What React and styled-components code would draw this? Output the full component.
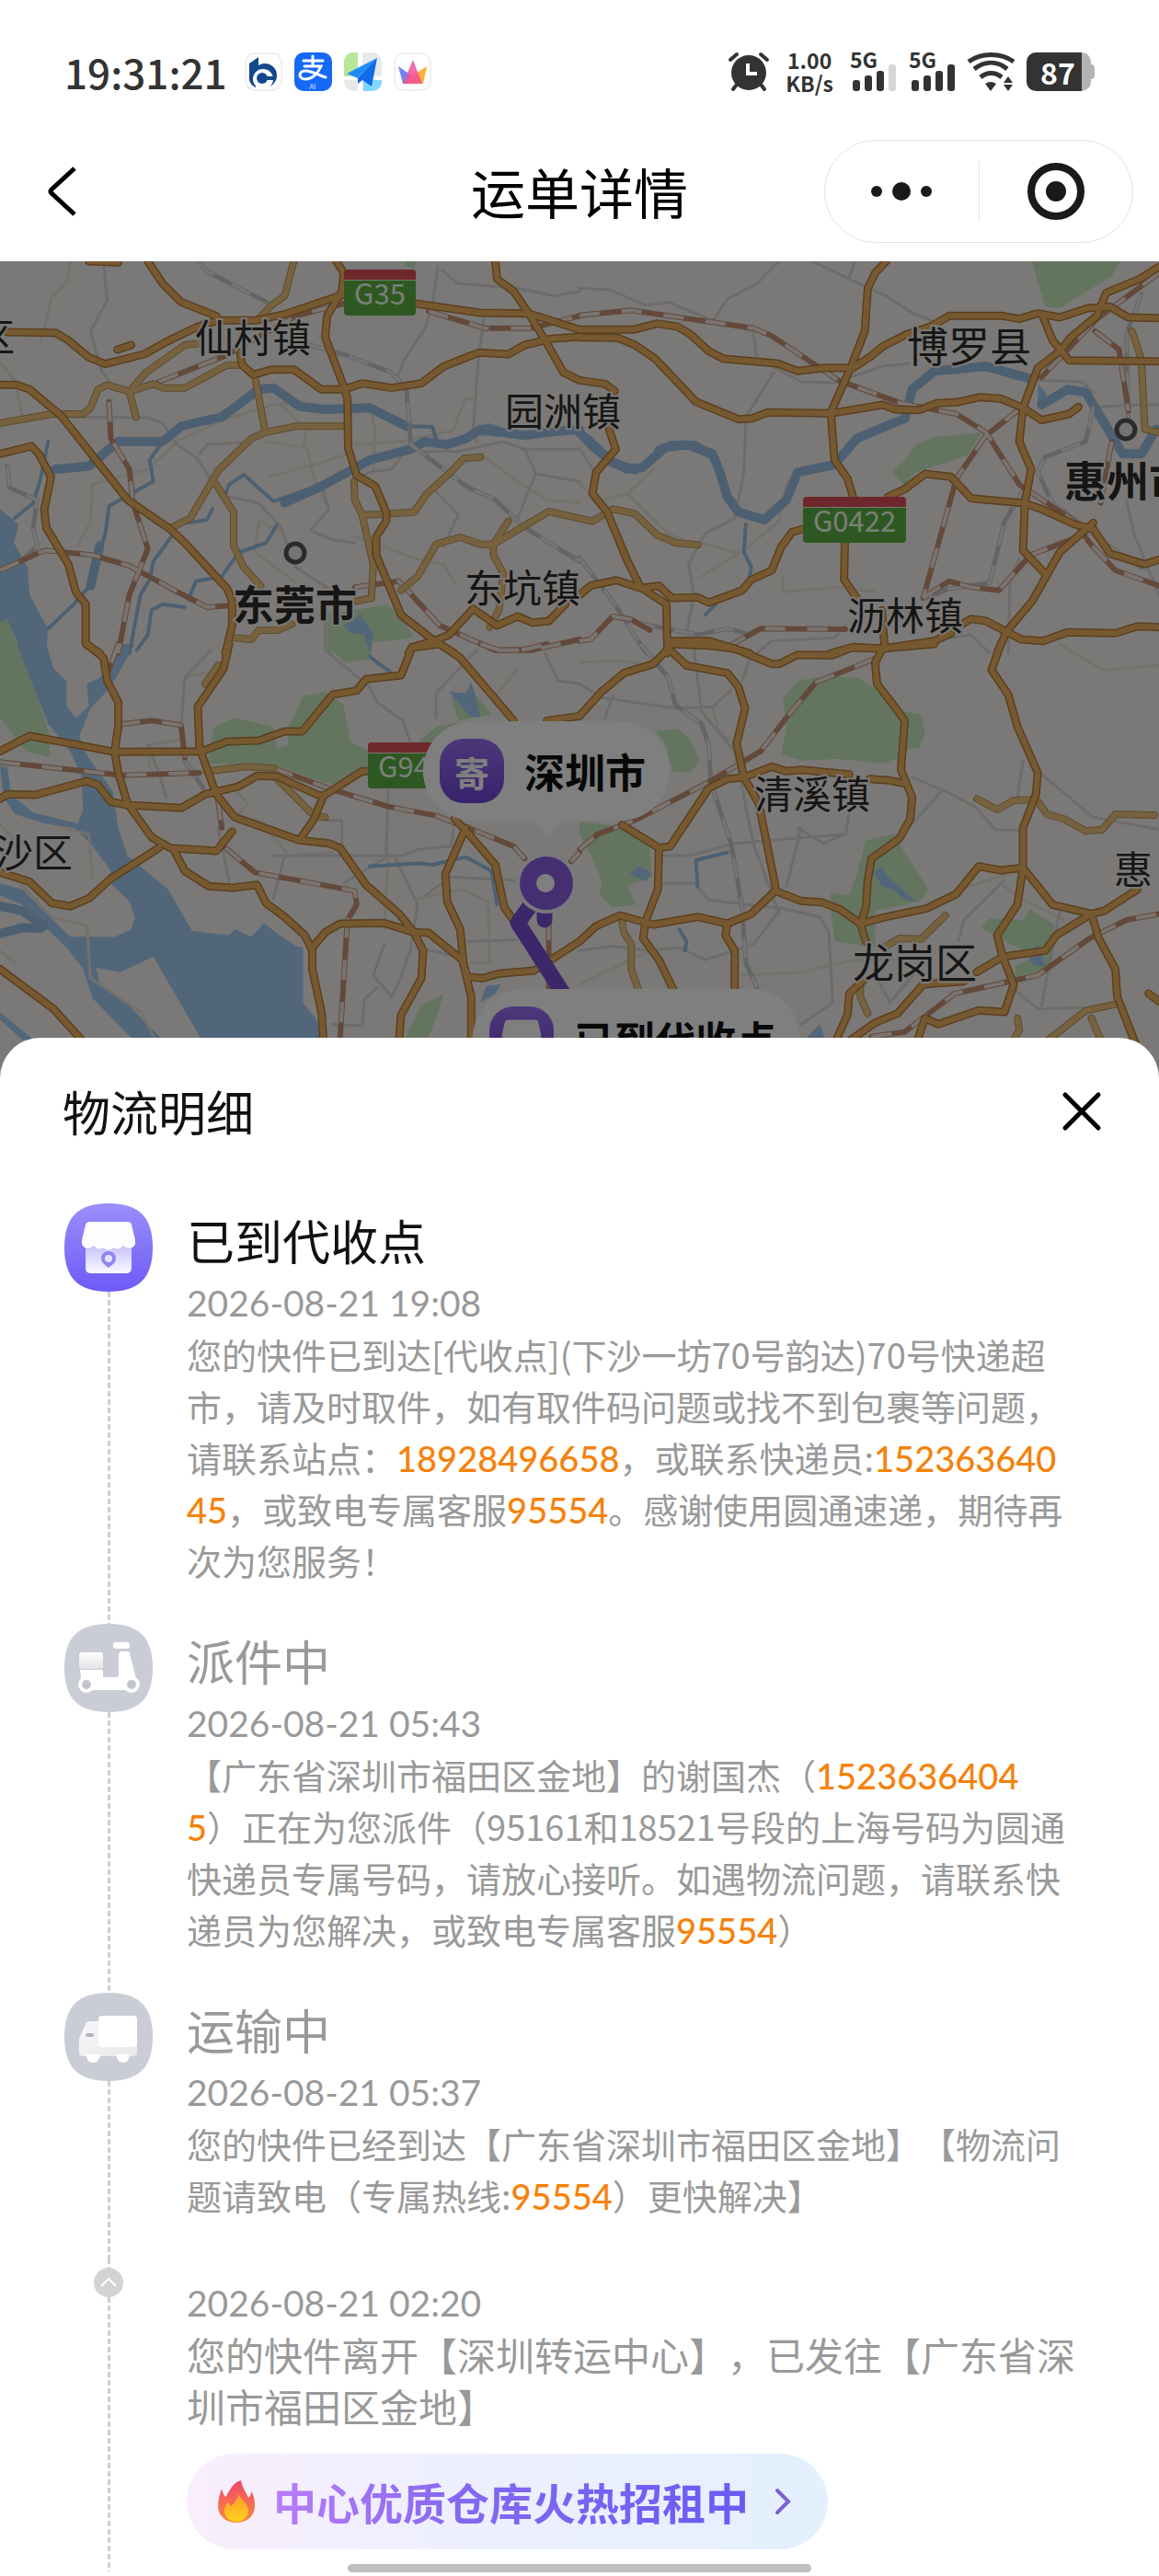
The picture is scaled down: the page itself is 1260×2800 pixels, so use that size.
import React, { useState } from "react";
import styled, { createGlobalStyle } from "styled-components";

const GlobalStyle = createGlobalStyle`
  * {
    box-sizing: border-box;
  }
  body {
    margin: 0;
    background: #ffffff;
    font-family: "Noto Sans CJK SC", sans-serif;
    text-spacing-trim: space-all;
  }
  button {
    padding: 0;
    border: none;
    background: none;
    font-family: inherit;
    cursor: pointer;
  }
  svg {
    display: block;
    flex: none;
    overflow: visible;
  }
`;

const Page = styled.div`
  position: relative;
  min-height: 100vh;
  overflow: hidden;
`;

/* status bar */
const StatusBar = styled.header`
  display: flex;
  align-items: center;
  justify-content: space-between;
  height: 132px;
  padding: 24px 70px 0;
  color: #333333;
  font-weight: 700;
`;
const StatusGroup = styled.div`
  display: flex;
  align-items: center;
  gap: 13px;
`;
const Clock = styled.time`
  margin-right: 6px;
  font-size: 44px;
  line-height: 56px;
  font-weight: 500;
`;
const NetSpeed = styled.div`
  margin: 0 5px;
  font-size: 23px;
  line-height: 25px;
  text-align: center;
`;
const Battery = styled.div`
  display: flex;
  align-items: center;
  &::after {
    content: "";
    width: 4px;
    height: 16px;
    border-radius: 0 4px 4px 0;
    background: #b3b3b3;
  }
`;
const BatteryLevel = styled.div`
  width: 70px;
  height: 42px;
  border-radius: 10px;
  background: linear-gradient(90deg, #333333 60px, #b3b3b3 60px);
  color: #ffffff;
  font-size: 32px;
  line-height: 42px;
  padding-left: 15px;
`;

/* navigation */
const NavBar = styled.nav`
  display: grid;
  grid-template-columns: 1fr auto 1fr;
  align-items: center;
  height: 152px;
  padding: 0 28px;
`;
const BackButton = styled.button`
  justify-self: start;
  margin-left: 20px;
`;
const NavTitle = styled.h1`
  margin: 0;
  font-size: 59px;
  line-height: 72px;
  font-weight: 400;
  color: #000000;
`;
const Capsule = styled.div`
  display: flex;
  align-items: center;
  justify-self: end;
  width: 336px;
  height: 112px;
  border: 1px solid #e4e4e4;
  border-radius: 56px;
`;
const CapsuleButton = styled.button`
  flex: 1;
  display: flex;
  justify-content: center;
  & + & {
    border-left: 1px solid #e4e4e4;
  }
`;

/* map */
const MapArea = styled.section`
  position: relative;
  height: 888px;
  overflow: hidden;
  background: #f7f3ef;
`;
const MapCanvas = styled.svg`
  width: 100%;
  height: 100%;
`;
const Mask = styled.div`
  position: absolute;
  inset: 0;
  background: rgba(0, 0, 0, 0.5);
`;
const Callout = styled.div`
  position: absolute;
  left: ${(props) => props.$left};
  top: ${(props) => props.$top};
  display: flex;
  align-items: center;
  gap: 22px;
  height: 108px;
  padding: 0 26px 0 18px;
  border-radius: 54px;
  background: #ffffff;
  font-size: 44px;
  font-weight: 700;
  color: #111111;
  white-space: nowrap;
  &::after {
    content: "";
    position: absolute;
    top: 100%;
    left: 50%;
    border: 16px solid transparent;
    border-top-color: #ffffff;
    border-bottom: none;
    margin-left: -14px;
  }
`;
const CalloutBadge = styled.span`
  display: flex;
  align-items: center;
  justify-content: center;
  width: 70px;
  height: 70px;
  border-radius: 26px;
  background: linear-gradient(#9b70f4, #7044d8);
  color: #ffffff;
  font-size: 38px;
`;

/* detail sheet */
const Sheet = styled.main`
  position: relative;
  margin-top: -44px;
  border-radius: 44px 44px 0 0;
  background: #ffffff;
`;
const SheetHeader = styled.div`
  display: flex;
  align-items: center;
  justify-content: space-between;
  padding: 40px 62px 60px 68px;
`;
const SheetTitle = styled.h2`
  margin: 0;
  font-size: 52px;
  line-height: 80px;
  font-weight: 400;
  color: #111111;
`;
const Timeline = styled.ol`
  list-style: none;
  margin: 0;
  padding: 0 87px 0 70px;
`;
const TimelineItem = styled.li`
  display: grid;
  grid-template-columns: 96px 1fr;
  column-gap: 37px;
`;
const Rail = styled.div`
  display: flex;
  flex-direction: column;
  align-items: center;
`;
const Dashes = styled.div`
  flex: ${(props) => (props.$short ? "0 0 10px" : "1")};
  width: 3px;
  background: repeating-linear-gradient(#cfcfcf 0 6px, transparent 6px 9px);
`;
const FoldButton = styled.button`
  display: flex;
  align-items: center;
  justify-content: center;
  width: 32px;
  height: 32px;
  border-radius: 50%;
  background: #d3d3d3;
`;
const Content = styled.div`
  padding: ${(props) => (props.$untitled ? "20px 0 24px" : "0 8px 41px 0")};
  font-size: ${(props) => (props.$untitled ? "42px" : "38px")};
  line-height: 56px;
  color: #999999;
`;
const ItemTitle = styled.h3`
  margin: 0;
  font-size: 52px;
  line-height: 80px;
  font-weight: 400;
  color: ${(props) => (props.$active ? "#111111" : "#999999")};
`;
const ItemTime = styled.time`
  display: block;
  font-family: Lato, sans-serif;
  font-size: 39px;
`;
const Detail = styled.p`
  margin: 0;
  word-break: break-all;
`;
const Phone = styled.a`
  color: #f5820c;
  font-family: Lato, sans-serif;
  font-weight: 500;
  line-height: 1;
  text-decoration: none;
`;
const Promo = styled.button`
  display: flex;
  align-items: center;
  gap: 20px;
  height: 104px;
  margin-top: 24px;
  padding: 0 40px 0 34px;
  border-radius: 52px;
  background: linear-gradient(90deg, #f9eefd, #efeffe 35%, #e3f0fe);
`;
const PromoText = styled.span`
  margin-right: 8px;
  background: linear-gradient(90deg, #b97cf8, #8468f2 40%, #6a5af5);
  background-clip: text;
  color: transparent;
  font-size: 47px;
  line-height: 64px;
  font-weight: 700;
`;
const HomeIndicator = styled.div`
  position: fixed;
  bottom: 4px;
  left: 30%;
  width: 40%;
  height: 9px;
  border-radius: 5px;
  background: #bfbfbf;
`;

// Every tile covers 630x430 of the map in its own 1568x1290 grid.
const tiles = [
  {
    x: 0,
    y: 280,
    land: [
      "0,1190 22,1180 55,1290 0,1290",
      "885,1160 960,1150 1000,1140 1050,1132 1090,1180 1120,1240 1010,1255 1005,1290 885,1290",
      "1098,12 1128,12 1120,34 1095,28",
    ],
    water: [
      "0,820 50,870 38,930 75,1010 80,1100 130,1210 125,1290 60,1290 20,1180 0,1190",
      "930,1200 975,1165 990,1190 1010,1230 1000,1290 985,1230 950,1225",
      "1290,550 1325,540 1360,555 1350,585 1300,580",
    ],
    rivers: [
      "320,600 440,600 490,550 540,535 600,520 700,430 740,425 810,485 880,495 1000,490 1100,550",
      "150,690 240,680 310,610",
      "770,800 870,745 940,700 1000,660 1110,625 1150,600 1210,610 1260,590 1300,560 1420,580 1480,570 1568,560",
      "270,940 245,1070",
    ],
    streams: [
      "1100,550 1170,552 1182,600",
      "440,600 405,660 415,730 340,780 295,810 285,900 270,960 250,1060 200,1130 130,1210",
      "610,770 620,740 660,708 740,795 860,745",
      "470,900 415,990 405,1050 380,1100 350,1290",
      "130,600 110,720 90,800 40,850",
      "510,1115 530,1055 600,1040 635,980",
      "370,1280 400,1230 410,1150 440,1130 500,1140",
      "510,865 560,855 575,820",
      "650,960 720,930 750,870",
    ],
    minor: [
      "190,12 180,80 140,130 110,280",
      "0,340 40,400 60,520",
      "250,740 400,690 480,600 600,530 740,480 820,470",
      "950,610 1080,600 1225,565 1260,460 1280,462",
      "730,715 880,665 940,640",
      "250,740 245,860 210,940",
      "1000,490 1015,560 1010,700",
      "720,600 830,620 850,720 890,820",
      "960,910 1120,980 1200,1000 1230,1060",
      "1310,650 1400,730 1480,790 1568,800",
      "770,900 700,860 690,960 800,1060",
      "820,620 830,560 760,480",
    ],
    grey: [
      "280,12 290,140 245,240 275,370 300,410",
      "1195,40 1240,85 1400,100 1500,125 1568,110",
      "1185,30 1170,150 1150,230 1095,330 1075,390",
      "1310,190 1295,330 1280,560 1290,600",
      "150,520 400,522 440,540 480,610 530,650 580,740",
      "540,640 560,610 680,600",
      "620,780 700,800 760,880 800,1010 890,1080",
      "870,740 890,820 840,890 900,920 960,930",
      "1140,632 1240,632 1360,600 1420,625 1568,625",
      "1420,625 1450,705 1400,850",
      "1450,705 1568,730",
      "950,730 1000,700 1060,690 1090,640",
      "1170,750 1240,840 1200,940",
      "880,1280 880,1160",
    ],
    tracks: [
      "540,12 560,45 720,145",
      "840,285 940,320 1060,375 1100,430 1112,610 1260,745 1340,790 1420,880 1500,940 1568,990",
      "20,680 25,750 100,790 90,880 100,940 50,1000",
    ],
    rails: [
      "1160,175 1310,230 1440,230 1568,190",
      "295,470 300,590 350,690 360,800 400,950 350,1100 320,1290",
      "0,1020 120,955 250,970 350,1005 480,1090 560,1140 620,1135",
      "960,1075 1080,1055 1190,1200 1340,1280 1440,1280 1568,1245",
      "430,405 610,320 800,190 930,150",
    ],
    yellow: [
      "795,12 770,125 735,155 700,200",
      "0,540 140,510 225,510 245,490 265,430 290,415 350,437 415,412 440,425 500,425 615,350 650,350",
      "350,437 395,375 500,285 540,280",
      "350,437 368,520",
      "690,390 718,570 680,590 590,695 515,850 465,880",
      "718,570 800,550 935,550",
      "585,740 632,830 632,940 660,1010 705,1070",
      "958,730 960,790 980,840 1010,1000 1005,1110 965,1120",
      "980,840 1120,830 1155,770 1215,705 1255,655 1300,650",
      "1085,1085 1130,1040 1180,935 1245,912 1300,935 1335,935 1485,828 1568,850",
      "1375,860 1335,935 1335,970 1362,1030 1350,1150 1325,1205",
      "635,1240 680,1245 700,1215 750,1215 790,1195",
    ],
    orange: [
      "400,12 440,85 490,145 585,190 590,205",
      "20,243 150,245 185,270 240,325 285,347 390,315 450,275 535,225 590,205 690,205 770,185 930,120",
      "910,12 930,50 925,110 885,190 880,260 930,420 940,460 942,620 965,710 1015,745 1045,830 1045,860 1018,910 1018,970 1085,1165 1175,1250 1230,1290",
      "650,310 655,350 685,382 735,365 795,365 870,430 930,430 980,410 1060,425 1140,410 1200,355 1295,310 1375,315 1420,285 1490,265 1568,258",
      "1125,150 1300,180 1430,182 1568,235",
      "1340,12 1345,70 1390,110 1435,190 1475,270 1525,375 1568,400",
      "0,415 45,415 80,430 165,515 345,790 460,885 500,930 615,1080 628,1120 628,1200 610,1290",
      "0,640 85,615 105,640 138,715 120,820 125,880 185,1000 205,1090 232,1130 232,1260 270,1290",
      "1105,1290 1115,1270 1175,1250 1215,1230 1280,1145 1345,1200 1400,1170 1440,1190 1485,1185 1530,1130",
      "318,300 355,285",
      "240,12 320,16",
    ],
  },
  {
    x: 630,
    y: 280,
    land: [
      "1225,12 1465,12 1440,60 1300,165 1260,160 1240,80",
      "845,700 880,660 910,610 960,585 1090,570 1050,645 910,700 880,745",
    ],
    water: ["1240,410 1262,440 1265,490 1240,488"],
    rivers: [
      "0,570 40,620 80,660 130,690 170,685 230,620 290,610 360,640 380,700 400,780 430,830 500,855 560,790 590,700 690,675 750,590 880,525 900,430 960,370 1100,355 1220,395",
      "1250,480 1320,430 1370,440 1430,560 1470,640 1520,640 1560,560",
      "20,590 90,670 150,692",
      "215,628 250,612 310,612 360,645",
    ],
    streams: ["450,870 445,960 465,1010 460,1040", "340,1165 370,1130"],
    minor: [
      "550,1040 550,1090 700,1075 800,1090",
      "440,960 540,860 560,740 600,690",
      "330,930 430,965 330,1040",
      "0,740 60,790 130,770 200,690",
      "130,770 240,900 320,940",
    ],
    grey: [
      "540,12 480,85 400,135 365,200",
      "0,100 80,105 180,155 240,145 360,205 470,240 480,330 600,405 690,408",
      "630,12 730,70 830,125 900,180 950,205",
      "745,12 730,65",
      "525,375 450,520 445,700 420,850 340,900 295,1000 310,1100 290,1220",
      "730,390 820,355 890,345",
      "1240,400 1360,405 1390,440",
      "0,620 40,700 30,770",
      "1390,490 1480,480 1568,480",
      "1480,790 1500,900 1568,1100",
      "1160,1290 1165,1050 1190,980",
      "480,1290 520,1250 690,1240 720,1200",
      "1000,1240 1060,1230 1110,1290",
    ],
    tracks: [
      "0,980 90,1120 180,1290",
      "1200,760 1150,860 1110,1060 1000,1080 940,1110",
      "1390,490 1370,600 1260,650 1240,700 1280,800 1345,860 1420,930 1520,1010",
      "1520,120 1480,250 1485,520",
      "150,1190 320,1230 400,1210 450,1225",
    ],
    rails: [
      "0,188 140,172 470,230 520,255 700,400 870,475 1020,510 1100,570 1190,740 1340,860 1380,930 1450,1020 1568,1070",
      "1195,490 1100,580 1020,720 930,1110",
      "1568,50 1400,200 1250,390",
      "930,1110 1000,1055 1060,1075 1135,1085 1220,970 1330,920",
      "0,1250 30,1245 90,1170 140,1180 190,1215",
      "400,1270 490,1210 720,1212",
      "1395,240 1460,300 1485,500",
      "1440,600 1410,800",
    ],
    yellow: [
      "1495,240 1520,330 1530,560 1568,570",
      "0,850 35,860 90,820 150,835 210,905 260,930 320,937",
    ],
    orange: [
      "0,235 145,235 210,215 265,225 300,250 350,305 390,330 535,345 590,370 660,360 740,360 790,320 820,290 885,250 950,225 1000,190 1145,190 1190,200 1240,182 1300,195 1375,165 1435,160 1485,195 1568,197",
      "0,260 105,262 150,285 205,330 315,470 430,527 465,525 510,505 680,508 820,480 855,495 920,497 965,475 1020,472 1085,455 1140,460 1200,490 1250,530 1325,510 1350,487",
      "830,12 800,50 780,100 772,240 735,355 680,505 690,660 725,720 740,780",
      "0,400 70,412 95,435",
      "80,560 98,625 45,700 35,770 75,830 130,990 165,1075 235,1130 238,1290",
      "0,1100 30,1070 100,1052 165,1078 215,1070 250,1110 320,1108 350,1125 440,1085 465,1050 520,1020 545,945 575,895 605,885",
      "718,930 716,1050 750,1110",
      "835,780 880,755 935,705 1005,715 1060,785 1200,800 1250,820 1340,870 1390,885 1435,965 1530,1000 1568,985",
      "1568,30 1515,70 1425,115 1400,190 1330,260 1300,305 1240,360 1200,490 1190,600 1222,690 1205,800 1200,955 1255,1025",
      "1255,195 1280,270 1325,335 1568,338",
      "1390,865 1300,960 1225,1120 1155,1220 1130,1290",
      "1035,1195 1060,1178 1100,1185 1195,1245 1255,1250 1320,1222 1450,1225 1510,1202 1568,1205",
      "818,1150 825,1260",
      "1005,1225 960,1250 820,1275 740,1270 680,1290",
      "238,1250 350,1250 460,1290",
    ],
  },
  {
    x: 0,
    y: 700,
    land: [
      "0,0 45,0 90,130 135,300 135,370 70,350 0,240",
      "560,390 580,270 635,240 740,270 750,340 780,330 780,270 820,170 880,155 930,200 950,320 995,345 995,410 900,460 740,395",
      "885,0 1000,0 1005,50 930,60",
      "1220,170 1290,170 1330,230 1240,250",
      "1110,1250 1140,1180 1200,1140 1180,1220 1160,1280 1095,1290",
      "1130,320 1180,270 1240,255 1180,330",
    ],
    water: [
      "45,0 125,0 145,80 180,120 180,200 205,240 240,205 235,130 270,110 300,60 320,0 365,0 300,140 245,210 215,300 230,350 245,380 305,480 320,600 345,690 455,800 520,935 620,950 635,930 680,955 715,910 745,940 800,985 820,990 820,1170 860,1230 865,1290 545,1290 415,1020 325,1070 260,1055 270,1110 350,1180 440,1290 360,1290 250,1155 225,1060 180,990 120,920 60,850 0,820 0,780 60,800 190,955 310,955 355,930 365,890 350,840 290,770 300,740 245,650 200,600 120,585 40,555 10,500 0,400 20,400 30,490 90,550 210,585 225,540 220,430 190,350 130,260",
      "1215,155 1260,160 1275,125 1285,160 1300,240 1270,235",
      "1315,1115 1355,1110 1340,1140 1300,1170",
      "0,1200 90,1290 60,1290 0,1225",
    ],
    rivers: ["0,855 60,870 120,920", "0,945 60,925 110,928"],
    streams: [
      "1000,40 1020,60 1055,90",
      "1000,725 1130,715 1170,720 1260,695 1330,740 1345,850",
    ],
    minor: [
      "0,590 40,640",
      "170,600 240,620 250,760",
      "60,790 140,890 235,920 245,1090 380,1200 420,1290",
      "400,330 500,310",
      "400,330 405,400",
      "640,480 670,520 640,560 710,580 780,690 900,680",
      "1050,700 1040,930",
      "1400,80 1340,170",
      "0,1000 40,1040",
      "1130,830 1250,800 1320,840 1325,1040 1270,1040",
      "500,110 570,90",
    ],
    grey: [
      "570,20 500,110 490,270 500,380",
      "880,20 1000,140 1020,190 1090,250 1110,320",
      "1290,20 1180,160 1180,240",
      "1050,480 1045,690",
      "740,690 1090,690 1130,670 1220,660 1230,580",
      "400,330 430,420 450,500",
      "1070,700 1130,850 1110,1000 1080,1100 1060,1150",
      "1040,980 1010,1080 1060,1150",
      "590,600 620,775",
      "770,690 740,830",
      "1150,820 1220,760 1390,770",
      "1265,970 1395,965",
      "1475,30 1510,120 1568,130",
      "880,575 925,575 925,650",
      "900,1240 980,1245 985,1160 1020,1120",
      "930,780 1040,700",
      "1130,990 1240,1020",
    ],
    tracks: ["500,380 550,470"],
    rails: [
      "0,385 330,428 540,420",
      "740,405 900,475 1050,530 1180,560 1300,615 1390,660 1420,700",
      "325,262 410,250 490,265 500,370",
      "590,510 600,600",
      "610,665 690,745 960,805 965,850 940,900 920,1290",
      "1485,900 1485,1120",
      "320,0 290,100",
      "1300,0 1350,20 1420,18 1480,0",
      "1545,710 1568,680",
    ],
    yellow: [
      "560,415 665,400 740,405",
      "750,440 850,560 880,565",
      "590,70 555,130",
    ],
    orange: [
      "0,350 80,300 180,322 310,352 545,350 615,318 700,315 770,285 818,285 900,165 965,152 990,115 1085,102 1115,12 1190,0 1245,45 1390,250",
      "235,0 280,45 290,120 320,190 320,270 310,350 320,420 345,520 410,630 460,665 585,675 628,612",
      "620,0 605,80 535,205 540,340 585,490 635,565 810,640 890,650 920,665 990,785 1080,880 1120,940 1145,1000 1140,1090 1085,1210 1080,1290",
      "0,505 20,490 95,492 235,447 265,460 300,515 345,525 490,535 555,490 645,465 695,430 750,432 860,492 875,495 980,415 995,415",
      "875,495 850,570 810,640",
      "0,745 80,775 140,845 190,855 240,830 300,765 430,665",
      "470,670 500,740 565,790 630,795 695,785 720,845 770,890 825,950 845,1000 845,1060 870,1200 875,1290",
      "845,990 880,940 920,912 1040,910 1120,940 1160,942 1250,1030 1265,1085 1305,1090 1350,1075 1445,1065 1568,970",
      "1260,600 1205,750 1210,840 1245,930 1255,1050 1275,1150 1275,1280",
      "1230,570 1265,615 1340,720 1365,860 1395,910",
      "0,1060 145,1190 220,1290",
      "1480,250 1568,235",
    ],
  },
  {
    x: 630,
    y: 700,
    land: [
      "550,180 590,120 640,108 750,108 800,145 870,215 925,230 935,290 920,340 880,345 870,370 820,390 700,375 600,380 545,360 560,280",
      "205,285 265,275 300,310 325,380 300,420 250,415 235,330",
      "0,580 110,595 190,650 195,760 130,790 155,850 90,860 55,820 60,770 35,700 0,620",
      "775,640 850,620 880,680 945,800 920,840 800,870 800,990 740,980 690,970 680,870 680,810 730,820 750,750",
      "1085,925 1110,895 1200,900 1220,865 1285,915 1270,1060 1180,1085 1180,1050 1230,1020 1140,960",
    ],
    water: [
      "795,745 820,725 830,755 850,775 910,840 880,835 850,800 820,790",
      "135,750 160,725 195,745 180,775",
      "610,1290 650,1240 665,1290",
      "1210,1010 1240,980 1260,1050 1230,1050",
    ],
    rivers: [],
    streams: ["400,680 315,705 320,790", "270,930 290,970 285,1000"],
    minor: [
      "440,1080 600,1070 740,1030 900,1030",
      "1300,0 1380,60 1420,85 1568,70",
      "0,60 110,55 200,70",
      "1140,780 1180,820 1310,900",
      "360,210 380,290 430,330",
      "1030,800 1160,750",
      "0,1110 190,1000",
    ],
    grey: [
      "0,130 60,175 260,210 360,205 410,150",
      "90,170 70,240",
      "460,50 440,120",
      "900,435 990,480 1070,530 1125,605 1195,608",
      "980,480 890,600",
      "1245,420 1390,565 1568,605",
      "1200,380 1185,500",
      "220,690 300,690 420,650 720,620 730,550",
      "600,600 560,790",
      "310,20 330,220",
      "330,220 420,350 470,650 510,780 540,880",
      "220,780 310,780 350,835 530,860",
      "0,1000 90,985 190,1000 270,990 340,1030 470,980 540,870",
      "540,860 650,890 675,940 685,1170 600,1240",
      "1150,770 1040,900 1025,970",
      "1150,1100 1240,1190 1360,1185",
      "800,1080 840,1170 930,1040",
      "1300,870 1250,1180",
      "590,600 660,650 720,620",
    ],
    tracks: [
      "165,0 240,110 260,200 330,260 350,330 355,450 410,650 440,860 450,1040 480,1120",
    ],
    rails: [
      "795,50 640,125 560,240 490,350 350,450 150,575 50,620 0,670",
      "790,1280 880,1265 1015,1140 1240,1080 1380,960 1480,900 1568,880",
    ],
    yellow: [
      "1235,505 1265,555 1310,570 1370,610 1415,605 1450,555 1555,558",
      "1230,508 1175,510 1130,540 1075,505",
      "115,905 120,940 140,980 140,1060 160,1130",
      "830,985 865,960 925,962 990,885",
      "760,1110 760,1150 780,1205",
      "1450,1175 1370,1195 1270,1290",
      "1185,1220 1190,1260 1175,1290",
      "1385,1220 1410,1290",
    ],
    orange: [
      "0,235 60,155 120,95 200,65 240,15 290,70 400,95 430,140 448,210 425,325 445,435 485,520 530,790",
      "240,0 350,5 420,15 520,65 540,65 590,35 685,37 735,12 820,15 960,0",
      "0,970 45,920 110,885 200,915 320,890 400,912 465,880 530,805 600,838 655,842 705,865 760,912 830,890 940,862 1020,815 1080,725 1140,738 1200,730 1280,850 1385,880 1420,870 1510,800",
      "820,15 800,60 805,130 850,200 880,250 870,410 900,500 895,570 865,635 790,700 780,770 775,860 760,912 775,970",
      "445,435 520,400 560,415 600,410 730,425",
      "785,440 840,445 880,455",
      "445,435 400,440 350,470 245,660 215,665 115,590",
      "215,665 212,800 180,900 172,960 215,1030 255,1130",
      "400,912 395,950 420,1000 420,1130",
      "1140,0 1115,85 1160,165 1185,270 1240,420 1235,490 1200,600 1200,730 1185,850 1130,950 1145,1020 1175,1110 1150,1200 1080,1195 970,1240 935,1220 915,1290",
      "1385,880 1290,950 1260,1000 1145,1020 1075,1070",
      "1385,880 1405,960 1450,1060 1455,1150 1500,1290 1540,1420",
      "770,1095 730,1140 725,1210 695,1290",
      "735,1290 800,1235 860,1205 930,1110 1040,1100",
      "1540,1140 1568,1165",
    ],
  },
];

// Painted from the bottom up, casings before their fills.
const lineLayers = [
  { kind: "minor", stroke: "#e6e3d6", width: 3 },
  { kind: "grey", stroke: "#d8d8d8", width: 3 },
  { kind: "streams", stroke: "#98c0e4", width: 4 },
  { kind: "rivers", stroke: "#98c0e4", width: 10 },
  { kind: "tracks", stroke: "#c9c9cd", width: 5 },
  { kind: "tracks", stroke: "#efeded", width: 3, dash: "22 22" },
  { kind: "rails", stroke: "#c79375", width: 6 },
  { kind: "rails", stroke: "#f3e9e3", width: 4, dash: "22 24" },
  { kind: "yellow", stroke: "#b8965a", width: 8 },
  { kind: "yellow", stroke: "#eec581", width: 6 },
  { kind: "orange", stroke: "#b57f3a", width: 9 },
  { kind: "orange", stroke: "#efb263", width: 6 },
];

const towns = [
  { name: "区", x: -26, y: 382, size: 42 },
  { name: "仙村镇", x: 212, y: 383, size: 42 },
  { name: "园洲镇", x: 549, y: 463, size: 42 },
  { name: "博罗县", x: 986, y: 394, size: 45 },
  { name: "东莞市", x: 253, y: 675, size: 45, bold: true },
  { name: "惠州市", x: 1157, y: 540, size: 46, bold: true },
  { name: "东坑镇", x: 505, y: 655, size: 42 },
  { name: "沥林镇", x: 921, y: 685, size: 42 },
  { name: "清溪镇", x: 820, y: 879, size: 42 },
  { name: "沙区", x: -7, y: 943, size: 43 },
  { name: "惠", x: 1211, y: 961, size: 42 },
  { name: "龙岗区", x: 927, y: 1064, size: 45 },
];

const shields = [
  { code: "G35", x: 374, y: 293, width: 78 },
  { code: "G0422", x: 873, y: 540, width: 112 },
  { code: "G94", x: 400, y: 807, width: 78 },
];

function TileLines({ kind, stroke, width, dash }) {
  return tiles.map((tile) => (
    <g
      key={`${tile.x}-${tile.y}`}
      transform={`translate(${tile.x} ${tile.y}) scale(${630 / 1568} ${1 / 3})`}
      fill="none"
      stroke={stroke}
      strokeWidth={width}
      strokeDasharray={dash}
      strokeLinejoin="round"
      strokeLinecap={dash ? "butt" : "round"}
    >
      {tile[kind].map((points) => (
        <polyline
          key={points}
          points={points}
          vectorEffect="non-scaling-stroke"
        />
      ))}
    </g>
  ));
}

function TileAreas({ kind, fill }) {
  return tiles.map((tile) => (
    <g
      key={`${tile.x}-${tile.y}`}
      transform={`translate(${tile.x} ${tile.y}) scale(${630 / 1568} ${1 / 3})`}
      fill={fill}
    >
      {tile[kind].map((points) => (
        <polygon key={points} points={points} />
      ))}
    </g>
  ));
}

function RouteMap() {
  return (
    <MapArea>
      <MapCanvas
        viewBox="0 284 1260 888"
        preserveAspectRatio="xMidYMid slice"
        role="img"
        aria-label="运输路线地图"
      >
        <TileAreas kind="land" fill="#c6eabf" />
        <TileAreas kind="water" fill="#a4cdf2" />
        {lineLayers.map((layer) => (
          <TileLines key={`${layer.kind}-${layer.width}`} {...layer} />
        ))}
        {shields.map((shield) => (
          <g key={shield.code} transform={`translate(${shield.x} ${shield.y})`}>
            <rect width={shield.width} height="50" rx="4" fill="#5cb043" />
            <path
              d={`M0 11V4a4 4 0 0 1 4-4H${shield.width - 4}a4 4 0 0 1 4 4V11Z`}
              fill="#dc5058"
            />
            <path d={`M0 11.5H${shield.width}`} stroke="#f0f0e8" />
            <text
              x={shield.width / 2}
              y="38"
              fill="#f4fff0"
              fontSize="31"
              textAnchor="middle"
            >
              {shield.code}
            </text>
          </g>
        ))}
        <g fill="#e8e8e8" stroke="#555555" strokeWidth="5">
          <circle cx="321" cy="601" r="10" />
          <circle cx="1224" cy="467" r="10" />
        </g>
        {towns.map((town) => (
          <text
            key={town.name}
            x={town.x}
            y={town.y}
            fontSize={town.size}
            fontWeight={town.bold ? 700 : 400}
            fill="#2c2c2c"
            stroke="#f7f3ef"
            strokeWidth="4"
            paintOrder="stroke"
          >
            {town.name}
          </text>
        ))}
        <g fill="none" stroke="#7a4fd6" strokeWidth="17" strokeLinejoin="round">
          <path d="M576 985L563 1003L622 1095" strokeLinecap="round" />
          <path d="M592 985V1000" strokeLinecap="round" />
        </g>
        <circle cx="594" cy="960" r="33" fill="#f4f0fa" />
        <circle cx="594" cy="960" r="29" fill="#8a5fe0" />
        <circle cx="593" cy="960" r="10" fill="#ffffff" />
      </MapCanvas>
      <Callout $left="36.5%" $top="500px">
        <CalloutBadge>寄</CalloutBadge>
        深圳市
      </Callout>
      <Callout $left="40.8%" $top="791px">
        <CalloutBadge>
          <StoreGlyph />
        </CalloutBadge>
        已到代收点
      </Callout>
      <Mask />
    </MapArea>
  );
}

const SQUIRCLE =
  "M48 0C80 0 96 14 96 48S80 96 48 96 0 82 0 48 16 0 48 0Z";

function StoreGlyph() {
  return (
    <svg width="70" height="70" viewBox="0 0 96 96">
      <path
        d="M28 20H68Q72 20 73 24L77 41Q78 48 73 49V69Q73 76 67 76H29Q23 76 23 69V49Q18 48 19 41L23 24Q24 20 28 20Z"
        fill="#ffffff"
      />
    </svg>
  );
}

function StoreIcon() {
  return (
    <svg width="96" height="96" viewBox="0 0 96 96">
      <defs>
        <linearGradient id="storeBg" x1="0" y1="0" x2="0" y2="1">
          <stop offset="0" stopColor="#9a8ffb" />
          <stop offset="1" stopColor="#6d5af8" />
        </linearGradient>
        <linearGradient id="storeWall" x1="0" y1="0" x2="0" y2="1">
          <stop offset="0" stopColor="#c4bdfd" />
          <stop offset="1" stopColor="#faf9ff" />
        </linearGradient>
      </defs>
      <path d={SQUIRCLE} fill="url(#storeBg)" />
      <path d="M23 44H73V70Q73 76 67 76H29Q23 76 23 70Z" fill="url(#storeWall)" />
      <path
        d="M28 20H68Q72 20 73 23L77 40Q78 48 71 49Q67 49 64 46Q59 52 54 48Q48 53 42 48Q37 52 32 46Q29 49 25 49Q18 48 19 40L23 23Q24 20 28 20Z"
        fill="#fdfcff"
      />
      <path
        d="M48 52a8 8 0 0 1 8 8c0 4-4 7-8 10-4-3-8-6-8-10a8 8 0 0 1 8-8Z"
        fill="#8f84f2"
      />
      <circle cx="48" cy="60" r="4" fill="#e6e3ff" />
    </svg>
  );
}

function ScooterIcon() {
  return (
    <svg width="96" height="96" viewBox="0 0 96 96">
      <defs>
        <linearGradient id="scooterBox" x1="0" y1="0" x2="0" y2="1">
          <stop offset="0" stopColor="#ffffff" />
          <stop offset="1" stopColor="#e2e2e6" />
        </linearGradient>
      </defs>
      <path d={SQUIRCLE} fill="#cbcdd6" />
      <rect x="16" y="31" width="26" height="18" rx="3" fill="url(#scooterBox)" />
      <rect x="53" y="20" width="18" height="7" rx="3" fill="#ffffff" />
      <path
        d="M17 50H40Q42 50 42 52V58H56Q59 58 59 55V34Q59 30 63 30H69Q71 30 71 32L78 60V72H18V58Z"
        fill="#ffffff"
      />
      <circle cx="24" cy="66" r="9" fill="#ffffff" />
      <circle cx="73" cy="66" r="9" fill="#ffffff" />
      <circle cx="24" cy="66" r="5" fill="#c3c5ce" />
      <circle cx="73" cy="66" r="5" fill="#c3c5ce" />
    </svg>
  );
}

function TruckIcon() {
  return (
    <svg width="96" height="96" viewBox="0 0 96 96">
      <defs>
        <linearGradient id="truckBody" x1="0" y1="0" x2="1" y2="1">
          <stop offset="0" stopColor="#f8f8fa" />
          <stop offset="1" stopColor="#e8e8ec" />
        </linearGradient>
      </defs>
      <path d={SQUIRCLE} fill="#cbcdd6" />
      <path
        d="M28 31H40V54H79V65Q79 69 75 69H20Q16 69 16 65V50L23 34Q24 31 28 31Z"
        fill="url(#truckBody)"
      />
      <path d="M24 67H39Q38 76 31 76T24 67Z" fill="#ffffff" />
      <path d="M56 67H71Q70 76 64 76T56 67Z" fill="#ffffff" />
      <rect x="37" y="25" width="42" height="34" rx="4" fill="#ffffff" />
      <rect x="23" y="44" width="9" height="4" rx="2" fill="#b4b6be" />
    </svg>
  );
}

function FlameIcon() {
  return (
    <svg width="40" height="46" viewBox="0 0 40 46">
      <defs>
        <linearGradient id="flameOuter" x1="0" y1="0" x2="0" y2="1">
          <stop offset="0" stopColor="#f0486a" />
          <stop offset="1" stopColor="#fb8a3c" />
        </linearGradient>
        <linearGradient id="flameInner" x1="0" y1="0" x2="0" y2="1">
          <stop offset="0" stopColor="#ff9b2e" />
          <stop offset="1" stopColor="#ffd21e" />
        </linearGradient>
      </defs>
      <path
        d="M25 0C26 8 31 13 33 19C35 18 36 15 36 12C40 18 40 23 40 28C40 39 31 46 20 46S0 39 0 28C0 21 2 15 4 9C5 13 6 16 8 18C13 12 15 3 25 0Z"
        fill="url(#flameOuter)"
      />
      <path
        d="M23 15C24 21 33 24 33 33C33 40 27 45 20 45S7 40 7 33C7 29 9 26 11 23C12 26 13 27 14 28C18 26 20 21 23 15Z"
        fill="url(#flameInner)"
      />
    </svg>
  );
}

function AppIcons() {
  return (
    <>
      <svg width="41" height="42" viewBox="0 0 41 42">
        <rect x="1" y="1" width="39" height="40" rx="10" fill="#fff" stroke="#e2e2e2" />
        <path d="M5 12L15 5V22L12 38Q6 35 5 30Z" fill="#15478c" />
        <circle cx="22" cy="25" r="13" fill="#15478c" />
        <circle cx="20" cy="29" r="11" fill="#fff" />
        <circle cx="19" cy="28" r="6" fill="#15478c" />
        <path d="M20 26H31V30H20Z" fill="#15478c" />
      </svg>
      <svg width="41" height="42" viewBox="0 0 41 42">
        <rect width="41" height="42" rx="10" fill="#1569f5" />
        <g fill="none" stroke="#ffffff" strokeWidth="3" strokeLinecap="round">
          <path d="M10 9H31M20 4V15M11 15H29C26 22 20 29 12 29C4 29 4 20 12 20C19 20 27 25 34 27" />
        </g>
        <text x="20" y="40" fontSize="7" fill="#a9caff" textAnchor="middle">
          AI
        </text>
      </svg>
      <svg width="41" height="42" viewBox="0 0 41 42">
        <defs>
          <clipPath id="mapIcon">
            <rect width="41" height="42" rx="10" />
          </clipPath>
        </defs>
        <g clipPath="url(#mapIcon)">
          <rect width="41" height="42" fill="#e6e9ec" />
          <path d="M0 0H15V26H0Z" fill="#b9e79a" />
          <path d="M21 30H41V42H21Z" fill="#7fd8ff" />
          <path d="M15 0H20V42H15ZM0 26H41V30H0Z" fill="#ffffff" />
          <path d="M36 6L3 23L15 28Z" fill="#1f8df8" />
          <path d="M36 6L15 28V34L20 30L30 37Z" fill="#0f6be6" />
        </g>
      </svg>
      <svg width="41" height="42" viewBox="0 0 41 42">
        <rect x="1" y="1" width="39" height="40" rx="10" fill="#fff" stroke="#e2e2e2" />
        <path d="M5 15L22 27L27 34H10Z" fill="#6f86f0" />
        <path d="M36 15L18 27L14 34H32Z" fill="#fbb034" />
        <path d="M21 8L31 34H10Z" fill="#f0509a" opacity="0.85" />
      </svg>
    </>
  );
}

function Signal({ strength }) {
  return (
    <svg width="51" height="44" viewBox="0 0 51 44" fill="#333333">
      <text x="0" y="18" fontSize="23" fontWeight="700">
        5G
      </text>
      {[12, 17, 22, 29].map((height, index) => (
        <rect
          key={height}
          x={3 + index * 13}
          y={43 - height}
          width="8"
          height={height}
          rx="3"
          opacity={index < strength ? 1 : 0.2}
        />
      ))}
    </svg>
  );
}

function PhoneStatus() {
  return (
    <StatusBar>
      <StatusGroup>
        <Clock>19:31:21</Clock>
        <AppIcons />
      </StatusGroup>
      <StatusGroup>
        <svg width="44" height="42" viewBox="0 0 44 42" fill="#333333">
          <circle cx="22" cy="22" r="19" />
          <g stroke="#333333" strokeWidth="4" strokeLinecap="round">
            <path d="M2 8L9 2M42 8L35 2M8 36L5 40M36 36L39 40" />
          </g>
          <path d="M21 12V23H31" fill="none" stroke="#fff" strokeWidth="4" />
        </svg>
        <NetSpeed>
          1.00
          <br />
          KB/s
        </NetSpeed>
        <Signal strength={3} />
        <Signal strength={4} />
        <svg width="51" height="42" viewBox="0 0 51 42">
          <g fill="none" stroke="#333333" strokeWidth="5">
            <path d="M1 10C15 0 36 0 50 10" />
            <path d="M7 18C19 9 32 9 43 18" />
            <path d="M14 27C21 21 30 21 37 27" />
          </g>
          <path
            d="M19 34Q25 30 31 34L25 42ZM44 26L49 33H39ZM44 42L49 35H39Z"
            fill="#333333"
          />
        </svg>
        <Battery>
          <BatteryLevel>87</BatteryLevel>
        </Battery>
      </StatusGroup>
    </StatusBar>
  );
}

const records = [
  {
    id: 1,
    title: "已到代收点",
    time: "2026-08-21 19:08",
    icon: <StoreIcon />,
    detail: [
      "您的快件已到达[代收点](下沙一坊70号韵达)70号快递超市，请及时取件，如有取件码问题或找不到包裹等问题，请联系站点：",
      { phone: "18928496658" },
      "，或联系快递员:",
      { phone: "15236364045" },
      "，或致电专属客服",
      { phone: "95554" },
      "。感谢使用圆通速递，期待再次为您服务！",
    ],
  },
  {
    id: 2,
    title: "派件中",
    time: "2026-08-21 05:43",
    icon: <ScooterIcon />,
    detail: [
      "【广东省深圳市福田区金地】的谢国杰（",
      { phone: "15236364045" },
      "）正在为您派件（95161和18521号段的上海号码为圆通快递员专属号码，请放心接听。如遇物流问题，请联系快递员为您解决，或致电专属客服",
      { phone: "95554" },
      "）",
    ],
  },
  {
    id: 3,
    title: "运输中",
    time: "2026-08-21 05:37",
    icon: <TruckIcon />,
    detail: [
      "您的快件已经到达【广东省深圳市福田区金地】【物流问题请致电（专属热线:",
      { phone: "95554" },
      "）更快解决】",
    ],
  },
  {
    id: 4,
    time: "2026-08-21 02:20",
    detail: ["您的快件离开【深圳转运中心】，已发往【广东省深圳市福田区金地】"],
    promo: "中心优质仓库火热招租中",
  },
];

function RecordDetail({ parts }) {
  return (
    <Detail>
      {parts.map((part) =>
        part.phone ? (
          <Phone key={part.phone} href={`tel:${part.phone}`}>
            {part.phone}
          </Phone>
        ) : (
          part
        )
      )}
    </Detail>
  );
}

function Record({ record, active }) {
  const untitled = !record.title;

  return (
    <TimelineItem>
      <Rail>
        {untitled ? (
          <>
            <Dashes $short />
            <FoldButton type="button" aria-label="收起">
              <svg width="18" height="12" viewBox="0 0 18 12">
                <path d="M1 10L9 2L17 10" fill="none" stroke="#fff" strokeWidth="2" />
              </svg>
            </FoldButton>
          </>
        ) : (
          record.icon
        )}
        <Dashes />
      </Rail>
      <Content $untitled={untitled}>
        {!untitled && <ItemTitle $active={active}>{record.title}</ItemTitle>}
        <ItemTime>{record.time}</ItemTime>
        <RecordDetail parts={record.detail} />
        {record.promo && (
          <Promo type="button">
            <FlameIcon />
            <PromoText>{record.promo}</PromoText>
            <svg width="18" height="30" viewBox="0 0 18 30">
              <path
                d="M3 3L15 15L3 27"
                fill="none"
                stroke="#7d5fd0"
                strokeWidth="4"
                strokeLinecap="round"
              />
            </svg>
          </Promo>
        )}
      </Content>
    </TimelineItem>
  );
}

function App() {
  const [open, setOpen] = useState(true);

  return (
    <Page>
      <GlobalStyle />
      <PhoneStatus />
      <NavBar>
        <BackButton type="button" aria-label="返回">
          <svg width="40" height="56" viewBox="0 0 40 56">
            <path
              d="M33 3L8 26Q6 28 8 30L33 53"
              fill="none"
              stroke="#000"
              strokeWidth="5"
            />
          </svg>
        </BackButton>
        <NavTitle>运单详情</NavTitle>
        <Capsule>
          <CapsuleButton type="button" aria-label="更多">
            <svg width="68" height="66" viewBox="0 0 68 66" fill="#1a1a1a">
              <circle cx="7" cy="33" r="6" />
              <circle cx="34" cy="33" r="10" />
              <circle cx="61" cy="33" r="6" />
            </svg>
          </CapsuleButton>
          <CapsuleButton type="button" aria-label="关闭小程序">
            <svg width="66" height="66" viewBox="0 0 66 66">
              <circle cx="33" cy="33" r="27" fill="none" stroke="#1a1a1a" strokeWidth="8" />
              <circle cx="33" cy="33" r="11" fill="#1a1a1a" />
            </svg>
          </CapsuleButton>
        </Capsule>
      </NavBar>
      <RouteMap />
      {open && (
        <Sheet>
          <SheetHeader>
            <SheetTitle>物流明细</SheetTitle>
            <button type="button" aria-label="关闭" onClick={() => setOpen(false)}>
              <svg width="44" height="44" viewBox="0 0 44 44">
                <path
                  d="M4 4L40 40M40 4L4 40"
                  stroke="#000"
                  strokeWidth="5"
                  strokeLinecap="round"
                />
              </svg>
            </button>
          </SheetHeader>
          <Timeline>
            {records.map((record, index) => (
              <Record key={record.id} record={record} active={index === 0} />
            ))}
          </Timeline>
        </Sheet>
      )}
      <HomeIndicator />
    </Page>
  );
}

export default App;
